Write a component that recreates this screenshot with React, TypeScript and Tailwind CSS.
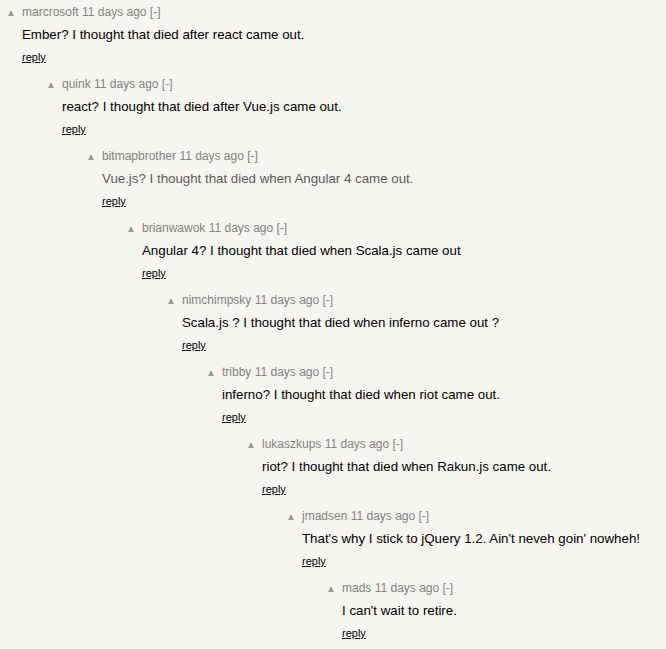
const comments = [
  { user: 'marcrosoft', text: 'Ember? I thought that died after react came out.' },
  { user: 'quink', text: 'react? I thought that died after Vue.js came out.' },
  { user: 'bitmapbrother', text: 'Vue.js? I thought that died when Angular 4 came out.', faded: true },
  { user: 'brianwawok', text: 'Angular 4? I thought that died when Scala.js came out' },
  { user: 'nimchimpsky', text: 'Scala.js ? I thought that died when inferno came out ?' },
  { user: 'tribby', text: 'inferno? I thought that died when riot came out.' },
  { user: 'lukaszkups', text: 'riot? I thought that died when Rakun.js came out.' },
  { user: 'jmadsen', text: "That's why I stick to jQuery 1.2. Ain't neveh goin' nowheh!" },
  { user: 'mads', text: "I can't wait to retire." },
]

const indents = ['pl-0', 'pl-[40px]', 'pl-[80px]', 'pl-[120px]', 'pl-[160px]', 'pl-[200px]', 'pl-[240px]', 'pl-[280px]', 'pl-[320px]']

export default function App() {
  return (
    <div className="min-h-screen bg-[#f6f6ef] pt-[5px] font-['Liberation_Sans',Arial,sans-serif]">
      {comments.map((c, i) => (
        <div key={c.user} className={`flex ${indents[i]} h-[72px]`}>
          <div className="w-[22px] flex justify-end pr-[8px] pt-[5px]">
            <svg width="6" height="6" viewBox="0 0 6 6" className="block">
              <polygon points="3,0 6,6 0,6" fill="#9a9a9a" />
            </svg>
          </div>
          <div className="flex flex-col">
            <div className="text-[12px] leading-[15px] text-[#828282]">
              {c.user} 11 days ago [-]
            </div>
            <div className={`text-[13.3px] leading-[16px] mt-[7px] ${c.faded ? 'text-[#5a5a5a]' : 'text-black'}`}>
              {c.text}
            </div>
            <div className="text-[11px] leading-[13px] mt-[8px] text-black underline">reply</div>
          </div>
        </div>
      ))}
    </div>
  )
}
